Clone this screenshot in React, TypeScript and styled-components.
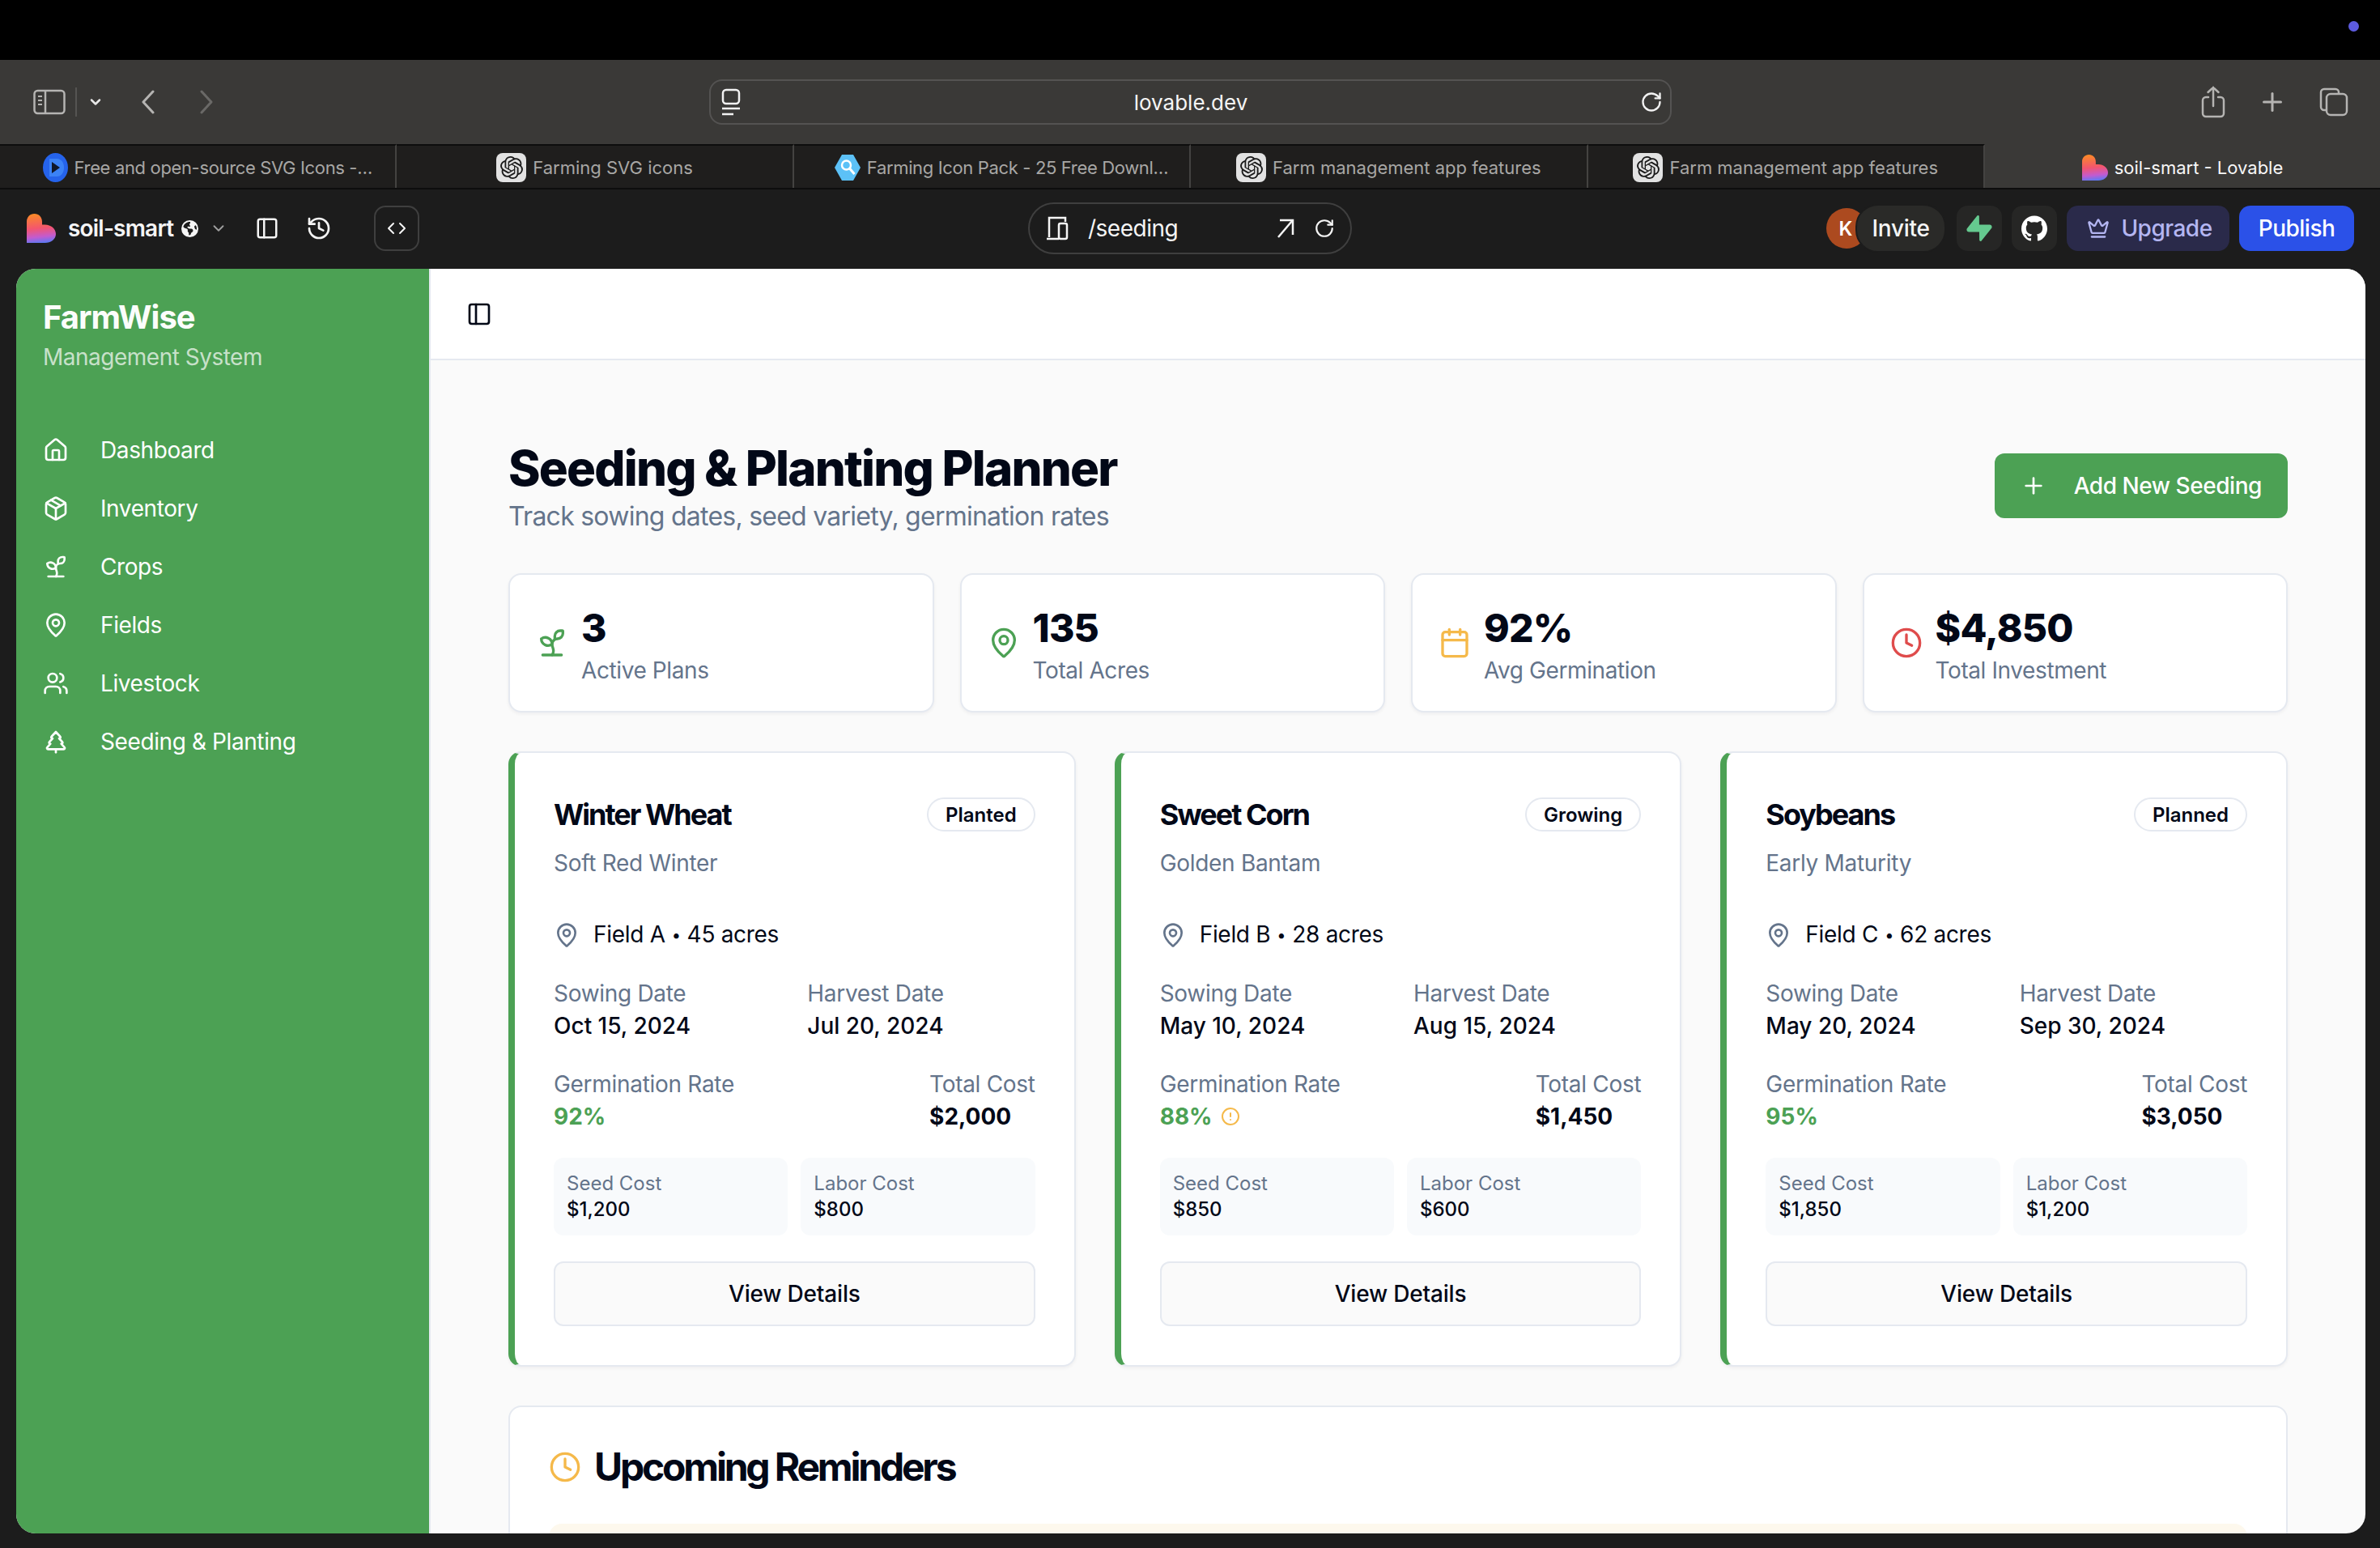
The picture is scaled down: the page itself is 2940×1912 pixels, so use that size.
import React from "react"
import styled, { createGlobalStyle } from "styled-components"
import {
	Calendar,
	ChevronDown,
	CircleAlert,
	Clock,
	Code,
	Crown,
	History,
	House,
	MapPin,
	Package,
	PanelLeft,
	Plus,
	RotateCw,
	Sprout,
	TreePine,
	Users,
} from "lucide-react"
import { FaEarthAmericas } from "react-icons/fa6"
import { SiGithub, SiOpenai, SiSupabase } from "react-icons/si"

const GREEN = "#4ca154"
const INK = "#020817"
const MUTED = "#64748b"
const LINE = "#e5e9f0"

const GlobalStyle = createGlobalStyle`
	html, body {
		margin: 0;
		padding: 0;
		background: #1c1c1c;
		overflow: hidden;
	}
	* {
		box-sizing: border-box;
	}
	body {
		font-family: Inter, "Liberation Sans", sans-serif;
	}
`

const Screen = styled.div`
	width: 2940px;
	height: 1912px;
	display: flex;
	flex-direction: column;
	background: #1c1c1c;
	overflow: hidden;
`

const MenuBar = styled.div`
	height: 74px;
	flex-shrink: 0;
	background: #000;
	display: flex;
	justify-content: flex-end;
	align-items: flex-start;
	padding: 26px 26px 0 0;
`

const MenuDot = styled.span`
	width: 13px;
	height: 13px;
	border-radius: 50%;
	background: #5d5bdf;
`

const Toolbar = styled.div`
	height: 104px;
	flex-shrink: 0;
	background: #3a3937;
	display: grid;
	grid-template-columns: 876px 1189px 1fr;
	align-items: center;
	color: #b5b4b2;
`

const ToolbarLeft = styled.div`
	display: flex;
	align-items: center;
	padding-left: 41px;
`

const VDivider = styled.span`
	width: 2px;
	height: 36px;
	background: #555452;
	margin: 0 13px 0 12px;
`

const NavArrow = styled.svg<{ $left: number }>`
	margin-left: ${(p) => p.$left}px;
`

const AddressBar = styled.div`
	height: 56px;
	border: 2px solid #545352;
	border-radius: 16px;
	display: flex;
	align-items: center;
	justify-content: space-between;
	padding: 0 9px 0 12px;
	color: #f2f2f2;
`

const AddressText = styled.span`
	font-size: 26px;
	color: #f5f5f5;
`

const ToolbarRight = styled.div`
	display: flex;
	align-items: center;
	justify-content: flex-end;
	gap: 40px;
	padding-right: 39px;
`

const TabStrip = styled.div`
	height: 56px;
	flex-shrink: 0;
	display: grid;
	grid-template-columns: repeat(5, 490.4px) 1fr;
	background: #1f1e1d;
	border-bottom: 2px solid #0d0d0d;
`

const Tab = styled.div<{ $active?: boolean; $truncated?: boolean }>`
	display: flex;
	align-items: center;
	justify-content: center;
	gap: 8px;
	padding-top: 2px;
	padding-left: ${(p) => (p.$truncated ? 24 : 0)}px;
	font-size: 22px;
	letter-spacing: ${(p) => (p.$truncated ? "-0.35px" : "0")};
	white-space: nowrap;
	color: ${(p) => (p.$active ? "#f7f7f7" : "#a8a7a5")};
	background: ${(p) => (p.$active ? "#3a3937" : "#1f1e1d")};
	border-top: 2px solid ${(p) => (p.$active ? "#3a3937" : "#0d0d0d")};
	border-right: ${(p) => (p.$active ? "none" : "2px solid #444341")};
`

const ChatIcon = styled.span`
	width: 37px;
	height: 36px;
	flex-shrink: 0;
	border-radius: 8px;
	background: #e2e2e2;
	color: #1a1a1a;
	display: flex;
	align-items: center;
	justify-content: center;
`

const AppBar = styled.div`
	height: 96px;
	flex-shrink: 0;
	display: grid;
	grid-template-columns: 1270px 400px 1fr;
	align-items: center;
	color: #f5f5f5;
`

const AppBarLeft = styled.div`
	display: flex;
	align-items: center;
	padding-left: 33px;
`

const ProjectName = styled.span`
	font-size: 28px;
	font-weight: 600;
	margin-left: 15px;
	margin-right: 10px;
	letter-spacing: -0.8px;
`

const GhostIcon = styled.span<{ $left: number; $color?: string }>`
	display: flex;
	margin-left: ${(p) => p.$left}px;
	color: ${(p) => p.$color || "#f5f5f5"};
`

const CodeButton = styled.span`
	width: 56px;
	height: 56px;
	margin-left: 52px;
	border: 2px solid #3f3f3f;
	border-radius: 14px;
	display: flex;
	align-items: center;
	justify-content: center;
`

const RoutePill = styled.div`
	height: 64px;
	border: 2px solid #3f3f3f;
	border-radius: 32px;
	display: flex;
	align-items: center;
	gap: 24px;
	padding: 0 19px 0 20px;
`

const RouteText = styled.span`
	font-size: 28px;
	letter-spacing: -0.5px;
	flex: 1;
`

const AppBarRight = styled.div`
	display: flex;
	align-items: center;
	justify-content: flex-end;
	padding-right: 32px;
`

const Avatar = styled.span`
	width: 50px;
	height: 50px;
	border-radius: 50%;
	background: #ac4a1f;
	color: #fff;
	font-size: 24px;
	font-weight: 600;
	display: flex;
	align-items: center;
	justify-content: center;
	padding-right: 2px;
`

const InviteButton = styled.span`
	width: 112px;
	height: 60px;
	margin-left: -14px;
	margin-right: 13px;
	border: 2px solid #1c1c1c;
	border-radius: 28px;
	background: #2a2a28;
	font-size: 28px;
	font-weight: 500;
	letter-spacing: -0.3px;
	display: flex;
	align-items: center;
	justify-content: center;
`

const SquareButton = styled.span`
	width: 56px;
	height: 56px;
	margin-right: 12px;
	border-radius: 14px;
	background: #262625;
	display: flex;
	align-items: center;
	justify-content: center;
	color: #fff;
`

const UpgradeButton = styled.span`
	width: 201px;
	height: 56px;
	margin-right: 12px;
	padding-left: 4px;
	border-radius: 14px;
	background: #2a2a4a;
	color: #b4b6f2;
	font-size: 28px;
	font-weight: 500;
	letter-spacing: -0.5px;
	display: flex;
	align-items: center;
	justify-content: center;
	gap: 14px;
`

const PublishButton = styled.span`
	width: 142px;
	height: 56px;
	border-radius: 14px;
	background: #2b51e8;
	color: #fff;
	font-size: 28px;
	font-weight: 500;
	letter-spacing: -0.5px;
	display: flex;
	align-items: center;
	justify-content: center;
`

const Panel = styled.div`
	flex: 1;
	min-height: 0;
	margin: 2px 18px 18px 20px;
	border-radius: 24px;
	overflow: hidden;
	display: flex;
	background: #fafafa;
`

const Sidebar = styled.aside`
	width: 510px;
	flex-shrink: 0;
	background: ${GREEN};
	color: #fff;
	padding: 36px 33px;
`

const Brand = styled.div`
	font-size: 40px;
	line-height: 48px;
	font-weight: 700;
	letter-spacing: -1px;
	color: #fbfdfb;
`

const BrandSub = styled.div`
	font-size: 28px;
	line-height: 40px;
	margin-top: 5px;
	letter-spacing: -0.5px;
	color: rgba(255, 255, 255, 0.7);
`

const Nav = styled.nav`
	margin-top: 59px;
	display: flex;
	flex-direction: column;
`

const NavItem = styled.div`
	height: 72px;
	display: flex;
	align-items: center;
	gap: 39px;
	font-size: 28px;
	letter-spacing: -0.4px;
	color: #fff;
	svg {
		flex-shrink: 0;
	}
`

const Main = styled.main`
	flex: 1;
	min-width: 0;
	display: flex;
	flex-direction: column;
	border-left: 2px solid ${LINE};
`

const TopBar = styled.div`
	height: 113px;
	flex-shrink: 0;
	background: #fff;
	border-bottom: 2px solid ${LINE};
	display: flex;
	align-items: center;
	padding: 0 0 0 44px;
	color: ${INK};
`

const Content = styled.div`
	flex: 1;
	min-height: 0;
	overflow: hidden;
	padding: 95px 96px 0;
	display: flex;
	flex-direction: column;
	gap: 48px;
`

const PageHead = styled.div`
	display: flex;
	align-items: center;
	justify-content: space-between;
`

const PageTitle = styled.h1`
	margin: 2px 0 0;
	font-size: 60px;
	line-height: 72px;
	font-weight: 800;
	letter-spacing: -1.8px;
	color: ${INK};
`

const PageSub = styled.p`
	margin: 0 0 -2px;
	font-size: 32px;
	line-height: 48px;
	letter-spacing: -0.75px;
	color: ${MUTED};
`

const AddButton = styled.button`
	height: 80px;
	width: 362px;
	border: none;
	border-radius: 12px;
	background: ${GREEN};
	color: #fff;
	font: 500 28px Inter, sans-serif;
	letter-spacing: -0.45px;
	display: flex;
	align-items: center;
	justify-content: space-between;
	padding: 0 32px;
`

const StatGrid = styled.div`
	display: grid;
	grid-template-columns: repeat(4, 1fr);
	gap: 32px;
`

const StatCard = styled.div`
	display: flex;
	align-items: center;
	gap: 16px;
	padding: 32px;
	background: #fff;
	border: 2px solid ${LINE};
	border-radius: 16px;
	box-shadow: 0 2px 4px rgba(15, 23, 42, 0.05);
`

const StatValue = styled.div`
	margin-top: 2px;
	font-size: 48px;
	line-height: 64px;
	font-weight: 800;
	letter-spacing: -0.8px;
	color: ${INK};
`

const StatLabel = styled.div`
	margin-bottom: -2px;
	font-size: 28px;
	line-height: 40px;
	letter-spacing: -0.4px;
	color: ${MUTED};
`

const CropGrid = styled.div`
	display: grid;
	grid-template-columns: repeat(3, 1fr);
	gap: 48px;
`

const CropCard = styled.div`
	background: #fff;
	border: 2px solid ${LINE};
	border-left: 8px solid ${GREEN};
	border-radius: 16px;
	box-shadow: 0 2px 4px rgba(15, 23, 42, 0.05);
	padding: 48px;
	display: flex;
	flex-direction: column;
`

const CropHead = styled.div`
	display: flex;
	align-items: center;
	justify-content: space-between;
	height: 56px;
`

const CropName = styled.div`
	font-size: 36px;
	font-weight: 700;
	letter-spacing: -2px;
	color: ${INK};
`

const Badge = styled.span`
	height: 42px;
	padding: 0 21px;
	border: 2px solid ${LINE};
	border-radius: 21px;
	font-size: 24px;
	font-weight: 600;
	display: flex;
	align-items: center;
	color: ${INK};
`

const Variety = styled.div`
	margin-top: 12px;
	font-size: 28px;
	line-height: 40px;
	letter-spacing: -0.3px;
	color: ${MUTED};
`

const FieldRow = styled.div`
	margin-top: 48px;
	display: flex;
	align-items: center;
	gap: 17px;
	font-size: 28px;
	line-height: 40px;
	letter-spacing: -0.3px;
	color: ${INK};
`

const FieldDot = styled.span`
	font-size: 20px;
	margin: 0 8px;
	vertical-align: 2px;
`

const DateGrid = styled.div`
	margin-top: 32px;
	display: grid;
	grid-template-columns: 1fr 1fr;
	gap: 32px;
`

const CostRow = styled.div`
	margin-top: 32px;
	display: flex;
	justify-content: space-between;
`

const FieldLabel = styled.div`
	font-size: 28px;
	line-height: 40px;
	letter-spacing: -0.3px;
	color: ${MUTED};
`

const FieldValue = styled.div<{ $strong?: boolean; $green?: boolean }>`
	font-size: 28px;
	line-height: 40px;
	display: flex;
	align-items: center;
	gap: 10px;
	font-weight: ${(p) => (p.$strong ? 700 : 500)};
	color: ${(p) => (p.$green ? GREEN : INK)};
`

const SplitGrid = styled.div`
	margin-top: 31px;
	display: grid;
	grid-template-columns: 1fr 1fr;
	gap: 16px;
`

const SplitBox = styled.div`
	background: #f8fafc;
	border-radius: 12px;
	padding: 16px;
`

const SplitLabel = styled.div`
	font-size: 24px;
	line-height: 32px;
	color: ${MUTED};
`

const SplitValue = styled.div`
	font-size: 24px;
	line-height: 32px;
	font-weight: 500;
	color: ${INK};
`

const DetailsButton = styled.button`
	margin-top: 32px;
	height: 80px;
	border: 2px solid ${LINE};
	border-radius: 12px;
	background: #fafafa;
	color: ${INK};
	font: 500 28px Inter, sans-serif;
	letter-spacing: -0.2px;
`

const ReminderCard = styled.div`
	background: #fff;
	border: 2px solid ${LINE};
	border-radius: 16px;
	padding: 42px 48px;
`

const ReminderHead = styled.div`
	display: flex;
	align-items: center;
	gap: 16px;
	height: 64px;
`

const ReminderTitle = styled.h2`
	margin: 0;
	font-size: 48px;
	line-height: 64px;
	font-weight: 700;
	letter-spacing: -3.2px;
	color: ${INK};
`

const ReminderItem = styled.div`
	margin-top: 38px;
	height: 120px;
	border-radius: 16px;
	background: #fdf8ed;
`

const LovableLogo: React.FC<{ id: string; size: number }> = ({ id, size }) => (
	<svg width={size} height={size} viewBox="0 0 36 36">
		<defs>
			<linearGradient id={id} x1="0.35" y1="0" x2="0.45" y2="1">
				<stop offset="0" stopColor="#fb8a26" />
				<stop offset="0.5" stopColor="#f4556f" />
				<stop offset="0.8" stopColor="#c25bd0" />
				<stop offset="1" stopColor="#5f78f2" />
			</linearGradient>
		</defs>
		<path
			d="M0 10C0 4 4 0 9.500 0C15 0 19 4 19 10V13.500H22.500C30 13.500 36 18.500 36 25C36 31.500 30 36 22.500 36H0Z"
			fill={`url(#${id})`}
		/>
	</svg>
)

const SafariSidebarIcon = () => (
	<svg width="40" height="32" viewBox="0 0 40 32" fill="none" stroke="currentColor" strokeWidth="2.500">
		<rect x="1.500" y="2" width="37" height="28" rx="4" />
		<path d="M15 2v28" />
		<path d="M6 9h5M6 14h5M6 19h5" strokeWidth="2" />
	</svg>
)

const PageMenuIcon = () => (
	<svg width="26" height="34" viewBox="0 0 26 34" fill="none" stroke="currentColor" strokeWidth="2.500">
		<rect x="3" y="2" width="20" height="17" rx="4" />
		<path d="M2 25h22M2 32h14" />
	</svg>
)

const ShareIcon = () => (
	<svg width="30" height="40" viewBox="0 0 30 40" fill="none" stroke="currentColor" strokeWidth="2.500" strokeLinecap="round">
		<path d="M9 14H6a4 4 0 0 0-4 4v16a4 4 0 0 0 4 4h18a4 4 0 0 0 4-4V18a4 4 0 0 0-4-4h-3" />
		<path d="M15 25V2M8.500 8 15 2l6.500 6" />
	</svg>
)

const TabsIcon = () => (
	<svg width="36" height="36" viewBox="0 0 36 36" fill="none" stroke="currentColor" strokeWidth="2.500">
		<path d="M8 28H6a4 4 0 0 1-4-4V6a4 4 0 0 1 4-4h14a4 4 0 0 1 4 4v2" />
		<rect x="9" y="8" width="25" height="26" rx="5" />
	</svg>
)

const DevicesIcon = () => (
	<svg width="28" height="32" viewBox="0 0 28 32" fill="none" stroke="currentColor" strokeWidth="2.500">
		<path d="M4 27V3h20v5" />
		<path d="M1 29h15" />
		<rect x="16" y="10" width="10" height="19" rx="2" />
	</svg>
)

const OpenArrowIcon = () => (
	<svg width="22" height="24" viewBox="0 0 22 24" fill="none" stroke="currentColor" strokeWidth="2.500">
		<path d="M2 23 19 3" />
		<path d="M4 2h16v18" />
	</svg>
)

const IconifyIcon = () => (
	<svg width="31" height="36" viewBox="0 0 31 36">
		<ellipse cx="15.500" cy="18" rx="15.500" ry="18" fill="#2563eb" />
		<path d="M8 7h9c6 0 9 5 9 11s-3 11-9 11H8Z" fill="#3b82f6" />
		<path d="M11 11v14l10-7Z" fill="#0f172a" />
	</svg>
)

const SearchHexIcon = () => (
	<svg width="32" height="34" viewBox="0 0 32 34">
		<path d="M9 1h14l9 16-9 16H9L0 17Z" fill="#5cc1f7" />
		<circle cx="14.500" cy="14" r="5.500" fill="none" stroke="#fff" strokeWidth="2.500" />
		<path d="m18.500 18 6 7" stroke="#fff" strokeWidth="3" />
	</svg>
)

const navItems = [
	{ label: "Dashboard", Icon: House },
	{ label: "Inventory", Icon: Package },
	{ label: "Crops", Icon: Sprout },
	{ label: "Fields", Icon: MapPin },
	{ label: "Livestock", Icon: Users },
	{ label: "Seeding & Planting", Icon: TreePine },
]

const stats = [
	{ value: "3", label: "Active Plans", Icon: Sprout, color: GREEN },
	{ value: "135", label: "Total Acres", Icon: MapPin, color: GREEN },
	{ value: "92%", label: "Avg Germination", Icon: Calendar, color: "#f5b94a" },
	{ value: "$4,850", label: "Total Investment", Icon: Clock, color: "#df4c4c" },
]

const crops = [
	{
		name: "Winter Wheat",
		status: "Planted",
		variety: "Soft Red Winter",
		field: "Field A",
		acres: "45 acres",
		sowing: "Oct 15, 2024",
		harvest: "Jul 20, 2024",
		rate: "92%",
		total: "$2,000",
		seed: "$1,200",
		labor: "$800",
	},
	{
		name: "Sweet Corn",
		status: "Growing",
		variety: "Golden Bantam",
		field: "Field B",
		acres: "28 acres",
		sowing: "May 10, 2024",
		harvest: "Aug 15, 2024",
		rate: "88%",
		warn: true,
		total: "$1,450",
		seed: "$850",
		labor: "$600",
	},
	{
		name: "Soybeans",
		status: "Planned",
		variety: "Early Maturity",
		field: "Field C",
		acres: "62 acres",
		sowing: "May 20, 2024",
		harvest: "Sep 30, 2024",
		rate: "95%",
		total: "$3,050",
		seed: "$1,850",
		labor: "$1,200",
	},
]

const App: React.FC = () => {
	return (
		<Screen>
			<GlobalStyle />
			<MenuBar>
				<MenuDot />
			</MenuBar>

			<Toolbar>
				<ToolbarLeft>
					<SafariSidebarIcon />
					<VDivider />
					<ChevronDown size={20} strokeWidth={3} color="#e8e8e8" />
					<NavArrow $left={45} width="20" height="30" viewBox="0 0 20 30" fill="none" stroke="currentColor" strokeWidth="3" strokeLinecap="round" strokeLinejoin="round">
						<path d="M16 2 4 15l12 13" />
					</NavArrow>
					<NavArrow $left={52} width="20" height="30" viewBox="0 0 20 30" fill="none" stroke="#6a6967" strokeWidth="3" strokeLinecap="round" strokeLinejoin="round">
						<path d="m4 2 12 13L4 28" />
					</NavArrow>
				</ToolbarLeft>
				<AddressBar>
					<PageMenuIcon />
					<AddressText>lovable.dev</AddressText>
					<RotateCw size={28} strokeWidth={2} />
				</AddressBar>
				<ToolbarRight>
					<ShareIcon />
					<Plus size={36} strokeWidth={2} />
					<TabsIcon />
				</ToolbarRight>
			</Toolbar>

			<TabStrip>
				<Tab $truncated>
					<IconifyIcon />
					Free and open-source SVG Icons -…
				</Tab>
				<Tab>
					<ChatIcon>
						<SiOpenai size={28} />
					</ChatIcon>
					Farming SVG icons
				</Tab>
				<Tab $truncated>
					<SearchHexIcon />
					Farming Icon Pack - 25 Free Downl…
				</Tab>
				<Tab>
					<ChatIcon>
						<SiOpenai size={28} />
					</ChatIcon>
					Farm management app features
				</Tab>
				<Tab>
					<ChatIcon>
						<SiOpenai size={28} />
					</ChatIcon>
					Farm management app features
				</Tab>
				<Tab $active>
					<LovableLogo id="tab-logo" size={32} />
					soil-smart - Lovable
				</Tab>
			</TabStrip>

			<AppBar>
				<AppBarLeft>
					<LovableLogo id="app-logo" size={36} />
					<ProjectName>soil-smart</ProjectName>
					<FaEarthAmericas size={21} />
					<GhostIcon $left={14} $color="#a0a0a0">
						<ChevronDown size={22} />
					</GhostIcon>
					<GhostIcon $left={34}>
						<PanelLeft size={30} strokeWidth={2} />
					</GhostIcon>
					<GhostIcon $left={33}>
						<History size={32} strokeWidth={2} />
					</GhostIcon>
					<CodeButton>
						<Code size={24} strokeWidth={2} />
					</CodeButton>
				</AppBarLeft>
				<RoutePill>
					<DevicesIcon />
					<RouteText>/seeding</RouteText>
					<OpenArrowIcon />
					<RotateCw size={26} strokeWidth={2} />
				</RoutePill>
				<AppBarRight>
					<Avatar>K</Avatar>
					<InviteButton>Invite</InviteButton>
					<SquareButton>
						<SiSupabase size={32} color="#65c98f" />
					</SquareButton>
					<SquareButton>
						<SiGithub size={32} />
					</SquareButton>
					<UpgradeButton>
						<Crown size={28} strokeWidth={2} />
						Upgrade
					</UpgradeButton>
					<PublishButton>Publish</PublishButton>
				</AppBarRight>
			</AppBar>

			<Panel>
				<Sidebar>
					<Brand>FarmWise</Brand>
					<BrandSub>Management System</BrandSub>
					<Nav>
						{navItems.map(({ label, Icon }) => (
							<NavItem key={label}>
								<Icon size={32} strokeWidth={2} />
								{label}
							</NavItem>
						))}
					</Nav>
				</Sidebar>

				<Main>
					<TopBar>
						<PanelLeft size={32} strokeWidth={2} />
					</TopBar>
					<Content>
						<PageHead>
							<div>
								<PageTitle>Seeding &amp; Planting Planner</PageTitle>
								<PageSub>Track sowing dates, seed variety, germination rates</PageSub>
							</div>
							<AddButton>
								<Plus size={32} strokeWidth={2} />
								Add New Seeding
							</AddButton>
						</PageHead>

						<StatGrid>
							{stats.map(({ value, label, Icon, color }) => (
								<StatCard key={label}>
									<Icon size={40} strokeWidth={2} color={color} />
									<div>
										<StatValue>{value}</StatValue>
										<StatLabel>{label}</StatLabel>
									</div>
								</StatCard>
							))}
						</StatGrid>

						<CropGrid>
							{crops.map((crop) => (
								<CropCard key={crop.name}>
									<CropHead>
										<CropName>{crop.name}</CropName>
										<Badge>{crop.status}</Badge>
									</CropHead>
									<Variety>{crop.variety}</Variety>
									<FieldRow>
										<MapPin size={32} strokeWidth={2} color={MUTED} />
										<span>
											{crop.field}
											<FieldDot>•</FieldDot>
											{crop.acres}
										</span>
									</FieldRow>
									<DateGrid>
										<div>
											<FieldLabel>Sowing Date</FieldLabel>
											<FieldValue>{crop.sowing}</FieldValue>
										</div>
										<div>
											<FieldLabel>Harvest Date</FieldLabel>
											<FieldValue>{crop.harvest}</FieldValue>
										</div>
									</DateGrid>
									<CostRow>
										<div>
											<FieldLabel>Germination Rate</FieldLabel>
											<FieldValue $strong $green>
												{crop.rate}
												{crop.warn && <CircleAlert size={24} strokeWidth={2} color="#f5b94a" />}
											</FieldValue>
										</div>
										<div>
											<FieldLabel>Total Cost</FieldLabel>
											<FieldValue $strong>{crop.total}</FieldValue>
										</div>
									</CostRow>
									<SplitGrid>
										<SplitBox>
											<SplitLabel>Seed Cost</SplitLabel>
											<SplitValue>{crop.seed}</SplitValue>
										</SplitBox>
										<SplitBox>
											<SplitLabel>Labor Cost</SplitLabel>
											<SplitValue>{crop.labor}</SplitValue>
										</SplitBox>
									</SplitGrid>
									<DetailsButton>View Details</DetailsButton>
								</CropCard>
							))}
						</CropGrid>

						<ReminderCard>
							<ReminderHead>
								<Clock size={40} strokeWidth={2} color="#f5b94a" />
								<ReminderTitle>Upcoming Reminders</ReminderTitle>
							</ReminderHead>
							<ReminderItem />
						</ReminderCard>
					</Content>
				</Main>
			</Panel>
		</Screen>
	)
}

export default App
